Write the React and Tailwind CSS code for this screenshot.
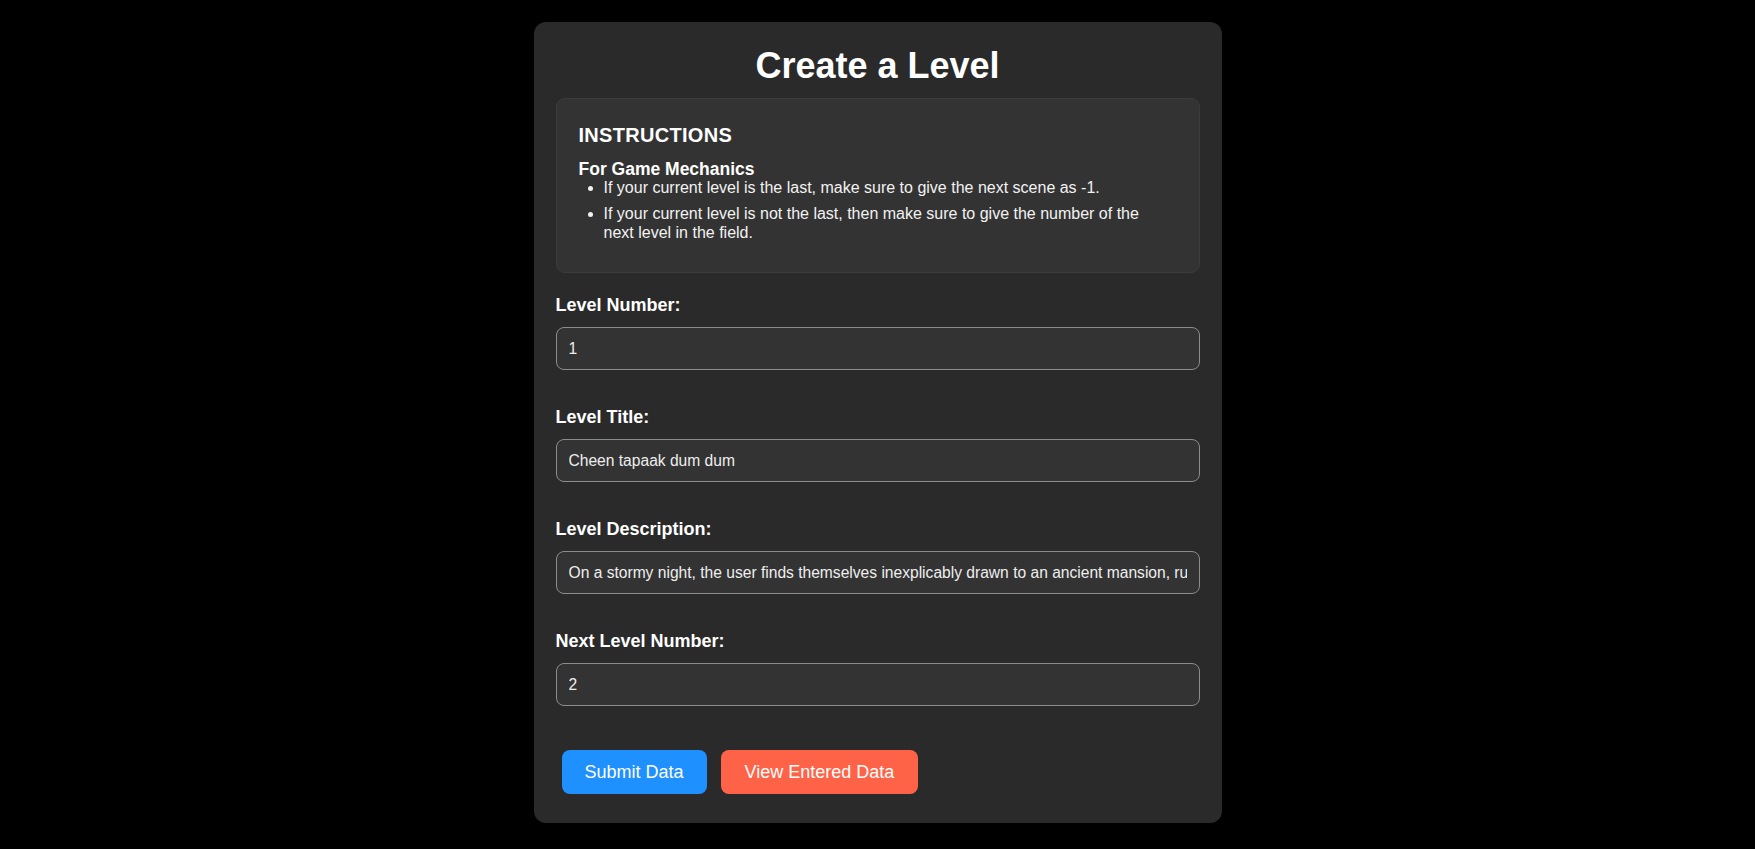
import { useState } from "react";

const fields = [
  { name: "levelNumber", label: "Level Number:", value: "1" },
  { name: "levelTitle", label: "Level Title:", value: "Cheen tapaak dum dum" },
  {
    name: "levelDescription",
    label: "Level Description:",
    value:
      "On a stormy night, the user finds themselves inexplicably drawn to an ancient mansion, rumored to be haunted by the spirits of its former residents.",
  },
  { name: "nextLevel", label: "Next Level Number:", value: "2" },
];

export default function App() {
  const [form, setForm] = useState(
    Object.fromEntries(fields.map((field) => [field.name, field.value]))
  );

  const handleChange = (event) => {
    const { name, value } = event.target;
    setForm((prev) => ({ ...prev, [name]: value }));
  };

  return (
    <div className="min-h-screen bg-black pt-[22px] font-['Liberation_Sans',Arial,sans-serif] text-white">
      <div className="mx-auto w-[688px] rounded-[12px] bg-[#2a2a2a] px-[22px] pb-[29px] pt-[23px]">
        <h1 className="text-center text-[36px] font-bold leading-[41px]">Create a Level</h1>

        <div className="mt-[12px] rounded-[9px] border border-[#3c3c3c] bg-[#333333] px-[22px] pb-[22px] pt-[25px]">
          <h3 className="text-[20px] font-bold leading-[23px] tracking-[0.3px]">INSTRUCTIONS</h3>
          <h4 className="mt-[12px] text-[17.5px] font-bold leading-[20px]">For Game Mechanics</h4>
          <ul className="list-disc pl-[25px] pr-[24px] text-[16px] leading-[18.4px] text-[#f2f2f2]">
            <li className="mb-2">If your current level is the last, make sure to give the next scene as -1.</li>
            <li className="mb-2">
              If your current level is not the last, then make sure to give the number of the next level in the
              field.
            </li>
          </ul>
        </div>

        <form className="mt-[22px]" onSubmit={(event) => event.preventDefault()}>
          {fields.map((field) => (
            <div key={field.name} className="mb-[37px]">
              <label className="block text-[18px] font-bold leading-[21px]" htmlFor={field.name}>
                {field.label}
              </label>
              <input
                id={field.name}
                name={field.name}
                type="text"
                value={form[field.name]}
                onChange={handleChange}
                className="mt-[11px] block h-[43px] w-full rounded-[8px] border border-[#8c8c8c] bg-[#333333] px-[12px] text-[15.6px] text-[#eeeeee] outline-none"
              />
            </div>
          ))}

          <div className="mt-[44px] flex gap-[14px] pl-[6px]">
            <button
              type="submit"
              className="h-[44px] rounded-[8px] bg-[#1e90ff] px-[23px] text-[18px] text-white"
            >
              Submit Data
            </button>
            <button
              type="button"
              className="h-[44px] rounded-[8px] bg-[#ff6347] px-[24px] text-[18px] text-white"
            >
              View Entered Data
            </button>
          </div>
        </form>
      </div>
    </div>
  );
}
